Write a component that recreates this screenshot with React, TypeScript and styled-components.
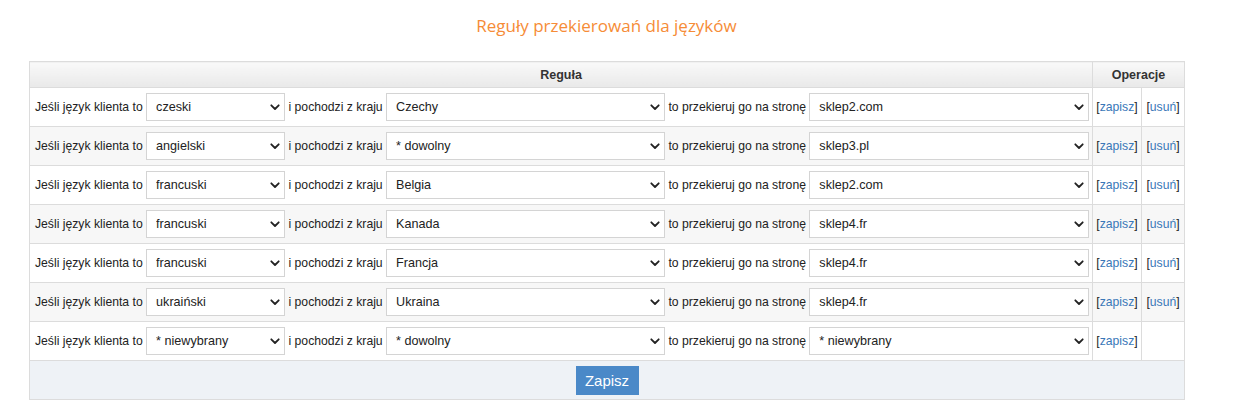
import styled, { createGlobalStyle } from 'styled-components';

type Rule = {
  language: string;
  country: string;
  shop: string;
  removable: boolean;
};

const rules: Rule[] = [
  { language: 'czeski', country: 'Czechy', shop: 'sklep2.com', removable: true },
  { language: 'angielski', country: '* dowolny', shop: 'sklep3.pl', removable: true },
  { language: 'francuski', country: 'Belgia', shop: 'sklep2.com', removable: true },
  { language: 'francuski', country: 'Kanada', shop: 'sklep4.fr', removable: true },
  { language: 'francuski', country: 'Francja', shop: 'sklep4.fr', removable: true },
  { language: 'ukraiński', country: 'Ukraina', shop: 'sklep4.fr', removable: true },
  { language: '* niewybrany', country: '* dowolny', shop: '* niewybrany', removable: false },
];

const GlobalStyle = createGlobalStyle`
  body {
    margin: 0;
    background: #fff;
    font-family: "Liberation Sans", Arial, sans-serif;
    font-size: 12.2px;
    color: #222;
  }
`;

function Select({ value, width }: { value: string; width: number }): JSX.Element {
  return (
    <SelectWrap $width={width}>
      <SelectBox defaultValue={value}>
        <option>{value}</option>
      </SelectBox>
      <Chevron width="10" height="7" viewBox="0 0 10 7">
        <path d="M1.3 1.3 L5 5 L8.7 1.3" fill="none" stroke="#222" strokeWidth="1.8" strokeLinecap="round" strokeLinejoin="round" />
      </Chevron>
    </SelectWrap>
  );
}

export default function App(): JSX.Element {
  return (
    <Page>
      <GlobalStyle />
      <Title>Reguły przekierowań dla języków</Title>
      <Table>
        <colgroup>
          <col style={{ width: 1063 }} />
          <col style={{ width: 49 }} />
          <col style={{ width: 43 }} />
        </colgroup>
        <thead>
          <tr>
            <HeadCell>Reguła</HeadCell>
            <HeadCell colSpan={2}>Operacje</HeadCell>
          </tr>
        </thead>
        <tbody>
          {rules.map((rule, i) => (
            <Row key={i} $odd={i % 2 === 1}>
              <RuleCell>
                Jeśli język klienta to <Select value={rule.language} width={139} /> i pochodzi z kraju{' '}
                <Select value={rule.country} width={279} /> to przekieruj go na stronę{' '}
                <Select value={rule.shop} width={280} />
              </RuleCell>
              <OpCell>
                [<OpLink href="#">zapisz</OpLink>]
              </OpCell>
              <OpCell>
                {rule.removable && (
                  <>
                    [<OpLink href="#">usuń</OpLink>]
                  </>
                )}
              </OpCell>
            </Row>
          ))}
          <tr>
            <FooterCell colSpan={3}>
              <SaveButton type="button">Zapisz</SaveButton>
            </FooterCell>
          </tr>
        </tbody>
      </Table>
    </Page>
  );
}

const Page = styled.div`
  padding: 14px 0 20px 29px;
  width: 1155px;
`;

const Title = styled.h1`
  margin: 0 0 23px;
  font-family: "Open Sans", sans-serif;
  font-size: 17px;
  line-height: 24px;
  font-weight: 400;
  color: #f68c37;
  text-align: center;
`;

const Table = styled.table`
  width: 1155px;
  border-collapse: collapse;
  table-layout: fixed;
  border: 1px solid #dcdcdc;
`;

const HeadCell = styled.th`
  height: 25px;
  padding: 0 5px;
  border: 1px solid #dcdcdc;
  background: linear-gradient(#f9f9f9, #e9e9e9);
  color: #333;
  font-size: 12.5px;
  font-weight: bold;
  text-align: center;
`;

const Row = styled.tr<{ $odd: boolean }>`
  background: ${({ $odd }) => ($odd ? '#f7f7f7' : '#fff')};
`;

const RuleCell = styled.td`
  padding: 5px 4px 5px 5px;
  border: 1px solid #dcdcdc;
  white-space: nowrap;
  line-height: 28px;
`;

const OpCell = styled.td`
  padding: 0 2px;
  border: 1px solid #dcdcdc;
  text-align: center;
  white-space: nowrap;
  color: #222;
`;

const OpLink = styled.a`
  color: #3a78b8;
  text-decoration: none;
`;

const SelectWrap = styled.span<{ $width: number }>`
  position: relative;
  display: inline-block;
  width: ${({ $width }) => $width}px;
  height: 28px;
  vertical-align: top;
`;

const SelectBox = styled.select`
  appearance: none;
  width: 100%;
  height: 28px;
  margin: 0;
  padding: 0 24px 0 9px;
  border: 1px solid #d4d4d4;
  border-radius: 0;
  background: #fff;
  font-family: "Liberation Sans", Arial, sans-serif;
  font-size: 12.6px;
  color: #222;
`;

const Chevron = styled.svg`
  position: absolute;
  right: 5px;
  top: 11px;
  pointer-events: none;
`;

const FooterCell = styled.td`
  height: 38px;
  padding: 0;
  border: 1px solid #dcdcdc;
  background: #eef2f6;
  text-align: center;
`;

const SaveButton = styled.button`
  width: 63px;
  height: 29px;
  border: none;
  background: #4a89c8;
  color: #fff;
  font-family: "Liberation Sans", Arial, sans-serif;
  font-size: 15px;
  vertical-align: middle;
`;
